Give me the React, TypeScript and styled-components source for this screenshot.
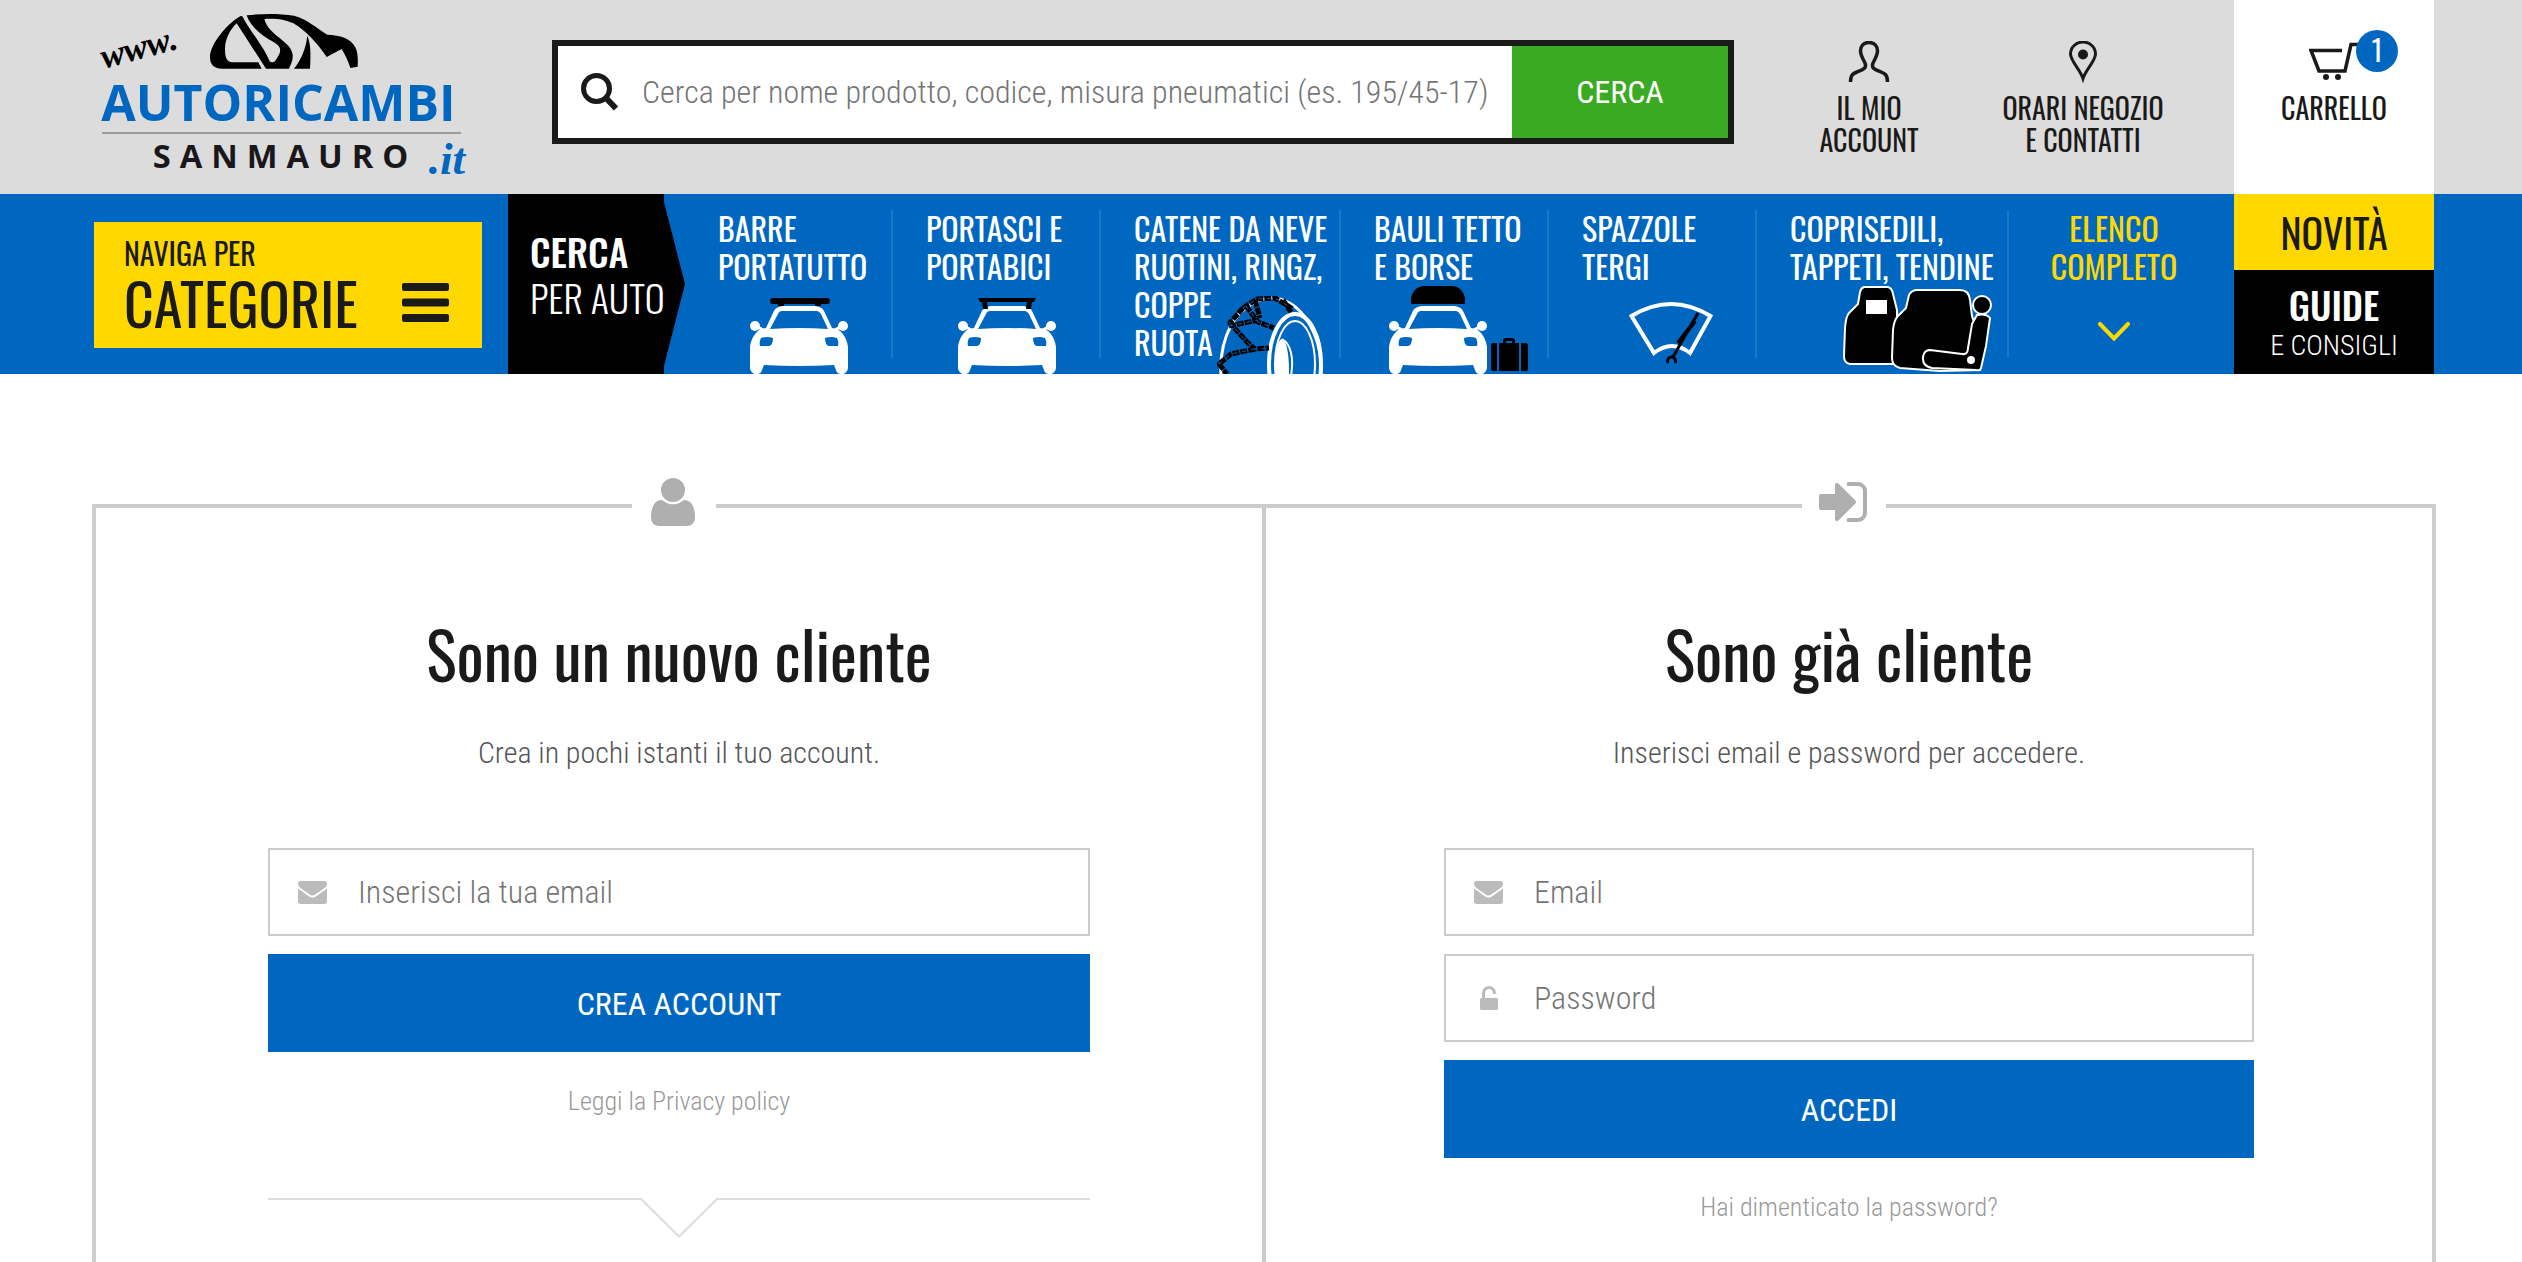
import React from "react";
import styled, { createGlobalStyle } from "styled-components";

const blue = "#0067c1";
const yellow = "#ffd800";
const ink = "#1a1a18";
const line = "#cccccc";
const oswald = `"Oswald", "Roboto Condensed", sans-serif`;
const roboto = `"Roboto Condensed", "Roboto", sans-serif`;

const GlobalStyle = createGlobalStyle`
  *, *::before, *::after { box-sizing: border-box; }
  body { margin: 0; background: #fff; color: ${ink}; font-family: ${roboto}; }
  a { color: inherit; text-decoration: none; }
  button { border: 0; padding: 0; cursor: pointer; }
  svg { display: block; flex: none; }
  h2, p, ul { margin: 0; padding: 0; }
  ul { list-style: none; }
`;

const Page = styled.div`
  min-height: 100vh;
  display: flex;
  flex-direction: column;
`;

/* ---------- header ---------- */

const Header = styled.header`
  display: flex;
  height: 194px;
  padding: 0 88px 0 94px;
  background: #dcdcdc;
`;

const SearchForm = styled.form`
  flex: 1;
  display: flex;
  align-items: stretch;
  height: 104px;
  margin: 40px 0 0 78px;
  border: 6px solid ${ink};
  background: #fff;
`;

const SearchLabel = styled.label`
  flex: 1;
  display: flex;
  align-items: center;
  gap: 23px;
  min-width: 0;
  padding-left: 23px;
`;

const TextInput = styled.input`
  flex: 1;
  min-width: 0;
  padding: 0;
  border: 0;
  outline: 0;
  background: transparent;
  color: ${ink};
  font: 300 32px/40px ${roboto};
  &::placeholder { color: #757575; opacity: 1; }
`;

const SearchButton = styled.button`
  width: 216px;
  background: #3aaa22;
  color: #fff;
  font: 400 32px/40px ${roboto};
`;

const Actions = styled.nav`
  display: flex;
  margin: 0 44px 0 28px;
`;

const Action = styled.a<{ $cart?: boolean }>`
  position: relative;
  display: flex;
  flex-direction: column;
  align-items: center;
  gap: 9px;
  width: ${(p) => (p.$cart ? 200 : 214)}px;
  padding-top: 41px;
  background: ${(p) => (p.$cart ? "#fff" : "transparent")};
  text-align: center;
  font: 400 28px/32px ${oswald};
`;

const Badge = styled.span`
  position: absolute;
  top: 30px;
  right: 36px;
  width: 42px;
  height: 42px;
  border-radius: 50%;
  background: ${blue};
  color: #fff;
  font: 400 28px/40px ${oswald};
`;

/* ---------- navigation bar ---------- */

const NavBar = styled.nav`
  display: flex;
  height: 180px;
  padding: 0 88px 0 94px;
  background: ${blue};
`;

const CategoriesButton = styled.button`
  display: flex;
  flex-direction: column;
  flex: none;
  width: 388px;
  height: 126px;
  margin: 28px 26px 0 0;
  padding: 13px 33px 0 30px;
  background: ${yellow};
  color: ${ink};
  text-align: left;
`;

const CategoriesSmall = styled.span`
  font: 400 30px/36px ${oswald};
`;

const CategoriesBig = styled.span`
  display: flex;
  align-items: center;
  justify-content: space-between;
  font: 400 58px/62px ${oswald};
`;

const CarSearch = styled.a`
  flex: none;
  width: 177px;
  padding: 34px 0 0 22px;
  background: #000;
  color: #fff;
  clip-path: polygon(0 0, 156px 0, 156px 8px, 100% 50%, 156px calc(100% - 8px), 156px 100%, 0 100%);
  font: 300 38px/46px ${oswald};
`;

const Strong = styled.strong`
  display: block;
  font-weight: 500;
`;

const MenuList = styled.ul`
  flex: 1;
  display: flex;
`;

const MenuItem = styled.li<{ $grow: number; $last?: boolean }>`
  flex: ${(p) => p.$grow} 1 0;
  min-width: 0;
  background: ${(p) =>
    p.$last ? "none" : "linear-gradient(#1c77c7, #1c77c7) no-repeat right 16px / 2px 148px"};
`;

const MenuLink = styled.a`
  display: grid;
  height: 100%;
  padding: 15px 0 0 33px;
  color: #fff;
  font: 400 32px/38px ${oswald};
  white-space: nowrap;
`;

const MenuText = styled.span`
  grid-area: 1 / 1;
`;

const MenuArt = styled.span<{ $right: number; $bottom: number }>`
  grid-area: 1 / 1;
  align-self: end;
  justify-self: end;
  margin: 0 ${(p) => p.$right}px ${(p) => p.$bottom}px 0;
`;

const AllLink = styled.a`
  display: flex;
  flex-direction: column;
  align-items: center;
  gap: 37px;
  padding: 15px 15px 0 0;
  color: ${yellow};
  font: 400 32px/38px ${oswald};
  text-align: center;
`;

const SideLinks = styled.div`
  flex: none;
  display: flex;
  flex-direction: column;
  width: 200px;
  text-align: center;
`;

const NewsLink = styled.a`
  background: ${yellow};
  color: ${ink};
  font: 400 40px/76px ${oswald};
`;

const GuideLink = styled.a`
  flex: 1;
  padding-top: 12px;
  background: #000;
  color: #fff;
  font: 300 28px/40px ${roboto};
  & > ${Strong} { font: 500 38px/44px ${oswald}; }
`;

/* ---------- login panels ---------- */

const Main = styled.main`
  flex: 1;
  display: flex;
  padding: 130px 86px 0 92px;
`;

const Frame = styled.div`
  flex: 1;
  display: grid;
  grid-template-columns: 1fr 1fr;
  border: solid ${line};
  border-width: 4px 0 0 4px;
`;

const Panel = styled.section<{ $inset: number }>`
  position: relative;
  padding: 105px ${(p) => p.$inset}px 20px;
  border-right: 4px solid ${line};
  text-align: center;
`;

const PanelIcon = styled.span`
  position: absolute;
  top: -30px;
  left: calc(50% - 47px);
  display: flex;
  align-items: center;
  justify-content: center;
  width: 84px;
  height: 48px;
  padding-right: 2px;
  background: #fff;
  color: #afafaf;
`;

const Title = styled.h2`
  font: 400 64px/80px ${oswald};
`;

const Lead = styled.p`
  margin-top: 40px;
  color: #555;
  font: 300 30px/40px ${roboto};
`;

const Form = styled.form`
  display: flex;
  flex-direction: column;
  gap: 18px;
  margin-top: 75px;
`;

const Field = styled.label`
  display: flex;
  align-items: center;
  gap: 31px;
  height: 88px;
  padding: 0 28px;
  border: 2px solid ${line};
  background: #fff;
  color: #bbb;
`;

const FieldIcon = styled.span`
  display: flex;
  justify-content: center;
  width: 29px;
`;

const Submit = styled.button`
  height: 98px;
  padding-top: 2px;
  background: ${blue};
  color: #fff;
  font: 400 32px/40px ${roboto};
`;

const SmallLink = styled.a`
  display: inline-block;
  margin-top: 29px;
  color: #999;
  font: 300 26px/40px ${roboto};
`;

const Divider = styled.div`
  display: flex;
  margin-top: 77px;
`;

const Rule = styled.span`
  flex: 1;
  height: 2px;
  background: #ddd;
`;

/* ---------- drawings ---------- */

const Logo = () => (
  <svg width="380" height="194" viewBox="42 0 1140 582" role="img" aria-label="Autoricambi Sanmauro">
    <g fill="#000">
      <path d="M482 48C450 64 390 128 390 172C390 196 404 206 426 206H545L535 187H455C439 185 435 170 435 148C435 118 450 88 470 70L558 206H627C636 186 639 178 638 164C636 138 606 122 580 98C564 84 556 70 553 57C590 55 612 58 640 70C676 90 712 130 740 171L785 147C796 166 806 186 811 204L833 200C834 178 834 158 826 142C812 114 780 106 742 104C710 84 682 58 642 47C596 40 540 41 500 46C512 82 548 108 582 127C606 142 606 154 586 182C580 188 574 188 569 184C558 158 546 140 530 116C514 94 500 74 487 49Z" />
      <path d="M682 107C692 130 693 164 690 206H642C664 178 678 144 682 107Z" />
    </g>
    <text x="72" y="206" transform="rotate(-15 72 206)" fill="#000" fontFamily="'Liberation Serif', serif" fontStyle="italic" fontWeight="700" fontSize="106">www.</text>
    <text x="64" y="364" fill={blue} fontFamily="'Open Sans', sans-serif" fontWeight="700" fontSize="150">AUTORICAMBI</text>
    <rect x="66" y="396" width="1077" height="6" fill="#9c9c9a" />
    <text x="218" y="504" fill="#1a171b" fontFamily="'Open Sans', sans-serif" fontWeight="700" fontSize="98" letterSpacing="27">SANMAURO</text>
    <text x="1046" y="522" fill={blue} fontFamily="'Liberation Serif', serif" fontStyle="italic" fontWeight="700" fontSize="136">.it</text>
  </svg>
);

const SearchIcon = () => (
  <svg width="38" height="38" viewBox="0 0 38 38" fill="none" stroke={ink}>
    <circle cx="15.5" cy="15.5" r="13" strokeWidth="5" />
    <path d="M25 25L35 35.5" strokeWidth="6" />
  </svg>
);

const PersonIcon = () => (
  <svg width="42" height="42" viewBox="-1 0 42 42" fill="none" stroke={ink} strokeWidth="3.5">
    <path d="M1.5 41C1.5 34 4 32.500 8 31C13 29 19 27.500 15.500 21C12.500 15.500 11.500 12 11.500 10C11.500 5 14.500 1.500 20 1.500S28.500 5 28.500 10C28.500 12 27.500 15.500 24.500 21C21 27.500 27 29 32 31C36 32.500 38.500 34 38.500 41" />
  </svg>
);

const PinIcon = () => (
  <svg width="28" height="42" viewBox="0 0 28 42">
    <path d="M14 37.500C11 28 1.500 20 1.500 13A12.500 12 0 0 1 26.500 13C26.500 20 17 28 14 37.500Z" fill="none" stroke={ink} strokeWidth="3" />
    <circle cx="14" cy="13.500" r="5" fill={ink} />
  </svg>
);

const CartIcon = () => (
  <svg width="50" height="42" viewBox="0 0 50 42" fill="none" stroke={ink} strokeWidth="3.5">
    <path d="M33 9.500H2L10 30H36L42 3.500H50" />
    <circle cx="17" cy="36" r="3" fill={ink} stroke="none" />
    <circle cx="29" cy="36" r="3" fill={ink} stroke="none" />
  </svg>
);

const BurgerIcon = () => (
  <svg width="47" height="39" viewBox="0 0 47 39" fill={ink}>
    <rect width="47" height="8" rx="2" />
    <rect y="15.500" width="47" height="8" rx="2" />
    <rect y="31" width="47" height="8" rx="2" />
  </svg>
);

const ChevronIcon = () => (
  <svg width="34" height="19" viewBox="0 0 34 19" fill="none" stroke={yellow} strokeWidth="4" strokeLinecap="round">
    <path d="M3 2L17 16.500L31 2" />
  </svg>
);

const CarBody = () => (
  <g>
    <path
      fill="#fff"
      fillRule="evenodd"
      d="M35 9H63C70 9 73 11 75 16L82 31L87 32C93 35 97 42 98 50V70C98 79 87 79 86 73L84 68Q49 70 14 68L12 73C11 79 0 79 0 70V50C1 42 5 35 11 32L16 31L23 16C25 11 28 9 35 9ZM32 14Q29 14 28 17L20 32Q49 30 78 32L71 17Q69 14 67 14ZM11 41Q9 45 10 49H19Q23 48 23 41Q17 39 11 41ZM87 41Q81 39 75 41Q75 48 79 49H88Q89 45 87 41Z"
    />
    <circle cx="5" cy="29" r="5" fill="#fff" />
    <circle cx="93" cy="29" r="5" fill="#fff" />
    <path d="M8 30L18 36M90 30L80 36" stroke="#fff" strokeWidth="3" />
  </g>
);

const CarBarsArt = () => (
  <svg width="98" height="77" viewBox="0 0 98 77">
    <CarBody />
    <rect x="20" y="1" width="60" height="6" rx="3" />
    <path d="M28 6H34V9H28ZM65 6H71V9H65Z" />
  </svg>
);

const CarRackArt = () => (
  <svg width="98" height="77" viewBox="0 0 98 77">
    <CarBody />
    <path d="M20 1H78L76 5H22ZM24 5H29L30 12H25ZM69 5H74L73 12H68Z" />
  </svg>
);

const CarBoxArt = () => (
  <svg width="140" height="88" viewBox="0 -11 140 88">
    <CarBody />
    <path d="M22 7V1Q25 -11 36 -11H63Q73 -11 76 1V7Z" />
    <path d="M102 48Q102 46 104 46H108V74H104Q102 74 102 72ZM110 46H114V44Q114 41 117 41H123Q126 41 126 44V46H130V74H110ZM117 46H123V44H117ZM132 46H136Q139 46 139 48V72Q139 74 136 74H132Z" fillRule="evenodd" />
  </svg>
);

const TyreArt = () => (
  <svg width="108" height="78" viewBox="0 0 108 78" fill="none">
    <path d="M4 80C2 45 16 8 52 2C84 0 106 40 104 80" stroke="#fff" strokeWidth="3" />
    <ellipse cx="78" cy="68" rx="26" ry="50" stroke="#fff" strokeWidth="4" />
    <ellipse cx="78" cy="68" rx="20" ry="43" stroke="#fff" strokeWidth="2" />
    <ellipse cx="65" cy="74" rx="7" ry="31" fill="#fff" />
    <path d="M65 43C74 48 77 62 74 80" stroke="#fff" strokeWidth="2" />
    <g stroke="#000" strokeWidth="5" strokeDasharray="7 1" strokeLinejoin="round">
      <path d="M26 12L40 3L58 2L76 13" />
      <path d="M29 10L41 26L57 32M12 30L41 24M66 4L74 16M38 4L43 22" />
      <path d="M12 26L31 47L38 53L52 52M38 53L14 58L2 68L10 78M26 12L12 28" />
    </g>
    <g stroke={blue} strokeWidth="1" strokeDasharray="4 5">
      <path d="M26 12L40 3L58 2L76 13M29 10L41 26L57 32M12 30L41 24" />
      <path d="M12 26L31 47L38 53L52 52M38 53L14 58L2 68" />
    </g>
  </svg>
);

const WiperArt = () => (
  <svg width="84" height="64" viewBox="0 0 84 64" fill="none">
    <path d="M2.500 15Q42 -9 81.500 15L61 52Q43 38 25 52Z" stroke="#fff" strokeWidth="4" />
    <path d="M69 12L44 56" stroke="#000" strokeWidth="3" />
    <path d="M66 20L49 42" stroke="#000" strokeWidth="4" />
    <path d="M39 62A4 4 0 1 1 46 62" stroke="#000" strokeWidth="3" />
  </svg>
);

const SeatsArt = () => (
  <svg width="150" height="86" viewBox="0 0 150 86" fill="#000" stroke="#fff" strokeWidth="2">
    <path d="M22 1H46Q50 2 51 8L55 24V78H8Q2 77 2 70L3 42Q4 30 7 27L16 18L18 6Q19 2 22 1Z" />
    <path d="M74 4H118Q127 4 128 14L130 30L140 60L138 84L98 85L58 82Q50 80 50 72L51 44Q52 34 56 30L64 22L67 9Q69 5 74 4Z" />
    <circle cx="140" cy="19" r="9" />
    <path d="M135 29Q144 27 148 32L144 60L139 82Q138 85 134 84L90 82Q80 80 81 71Q82 64 88 64L120 68Q126 69 126 62L130 38Z" />
    <circle cx="129" cy="74" r="3" fill="#fff" />
    <path d="M24 14H45V28H24Z" fill="#fff" stroke="none" />
  </svg>
);

const UserIcon = () => (
  <svg width="44" height="48" viewBox="0 0 1408 1536" fill="currentColor">
    <path
      transform="translate(0 1408) scale(1 -1)"
      d="M1408 131q0 -120 -73 -189.500t-194 -69.500h-874q-121 0 -194 69.500t-73 189.500q0 53 3.500 103.500t14 109t26.500 108.500t43 97.500t62 81t85.500 53.500t111.500 20q9 0 42 -21.500t74.500 -48t108 -48t133.500 -21.500t133.500 21.500t108 48t74.500 48t42 21.500q61 0 111.500 -20t85.500 -53.500t62 -81t43 -97.500t26.500 -108.500t14 -109t3.500 -103.500zM1088 1024q0 -159 -112.500 -271.500t-271.500 -112.500t-271.500 112.500t-112.500 271.500t112.500 271.500t271.500 112.500t271.500 -112.500t112.500 -271.500z"
    />
  </svg>
);

const SignInIcon = () => (
  <svg width="48" height="40" viewBox="128 256 1536 1280" fill="currentColor">
    <path d="M1312 896q0 26-19 45l-544 544q-19 19-45 19t-45-19-19-45v-288h-448q-26 0-45-19t-19-45v-384q0-26 19-45t45-19h448v-288q0-26 19-45t45-19 45 19l544 544q19 19 19 45zm352-352v704q0 119-84.500 203.500t-203.500 84.500h-320q-13 0-22.500-9.500t-9.500-22.500q0-4-1-20t-.5-26.500 3-23.500 10-19.500 20.500-6.500h320q66 0 113-47t47-113v-704q0-66-47-113t-113-47h-312l-11.500-1-11.500-3-8-5.500-7-9-2-13.500q0-4-1-20t-.5-26.500 3-23.500 10-19.500 20.500-6.500h320q119 0 203.500 84.500t84.500 203.500z" />
  </svg>
);

const EnvelopeIcon = () => (
  <svg width="29" height="23" viewBox="0 256 1792 1408" fill="currentColor">
    <path d="M1792 710v794q0 66-47 113t-113 47h-1472q-66 0-113-47t-47-113v-794q44 49 101 87 362 246 497 345 57 42 92.500 65.500t94.500 48 110 24.500h2q51 0 110-24.500t94.500-48 92.500-65.500q170-123 498-345 57-39 100-87zm0-294q0 79-49 151t-122 123q-376 261-468 325-10 7-42.500 31t-54 38.500-52 32.500-57.500 27-50 9h-2q-23 0-50-9t-57.500-27-52-32.500-54-38.500-42.500-31q-91-64-262-182.500t-205-142.500q-62-42-117-115.500t-55-136.500q0-78 41.500-130t118.500-52h1472q65 0 112.500 47t47.500 113z" />
  </svg>
);

const UnlockIcon = () => (
  <svg width="18" height="24" viewBox="320 0 1152 1536" fill="currentColor">
    <path d="M1376 768q40 0 68 28t28 68v576q0 40-28 68t-68 28h-960q-40 0-68-28t-28-68v-576q0-40 28-68t68-28h32v-320q0-185 131.500-316.500t316.500-131.500 316.500 131.500 131.500 316.500q0 26-19 45t-45 19h-64q-26 0-45-19t-19-45q0-106-75-181t-181-75-181 75-75 181v320h736z" />
  </svg>
);

/* ---------- data ---------- */

type Entry = {
  lines: string[];
  grow: number;
  right: number;
  bottom: number;
  Art: () => React.ReactElement;
};

const entries: Entry[] = [
  { lines: ["BARRE", "PORTATUTTO"], grow: 208, right: 45, bottom: 0, Art: CarBarsArt },
  { lines: ["PORTASCI E", "PORTABICI"], grow: 208, right: 45, bottom: 0, Art: CarRackArt },
  { lines: ["CATENE DA NEVE", "RUOTINI, RINGZ,", "COPPE", "RUOTA"], grow: 240, right: 16, bottom: 0, Art: TyreArt },
  { lines: ["BAULI TETTO", "E BORSE"], grow: 208, right: 20, bottom: 0, Art: CarBoxArt },
  { lines: ["SPAZZOLE", "TERGI"], grow: 208, right: 44, bottom: 9, Art: WiperArt },
  { lines: ["COPRISEDILI,", "TAPPETI, TENDINE"], grow: 252, right: 17, bottom: 2, Art: SeatsArt },
];

const Lines = ({ of }: { of: string[] }) => (
  <>
    {of.map((text, i) => (
      <React.Fragment key={text}>
        {i > 0 && <br />}
        {text}
      </React.Fragment>
    ))}
  </>
);

const stop = (e: React.FormEvent) => e.preventDefault();

export default function App() {
  return (
    <Page>
      <GlobalStyle />
      <Header>
        <a href="#home"><Logo /></a>
        <SearchForm onSubmit={stop}>
          <SearchLabel>
            <SearchIcon />
            <TextInput
              type="search"
              aria-label="Cerca"
              placeholder="Cerca per nome prodotto, codice, misura pneumatici (es. 195/45-17)"
            />
          </SearchLabel>
          <SearchButton type="submit">CERCA</SearchButton>
        </SearchForm>
        <Actions>
          <Action href="#account">
            <PersonIcon />
            <span><Lines of={["IL MIO", "ACCOUNT"]} /></span>
          </Action>
          <Action href="#contatti">
            <PinIcon />
            <span><Lines of={["ORARI NEGOZIO", "E CONTATTI"]} /></span>
          </Action>
        </Actions>
        <Action href="#carrello" $cart>
          <CartIcon />
          <Badge>1</Badge>
          <span>CARRELLO</span>
        </Action>
      </Header>

      <NavBar>
        <CategoriesButton type="button">
          <CategoriesSmall>NAVIGA PER</CategoriesSmall>
          <CategoriesBig>CATEGORIE <BurgerIcon /></CategoriesBig>
        </CategoriesButton>
        <CarSearch href="#auto">
          <Strong>CERCA</Strong>
          PER AUTO
        </CarSearch>
        <MenuList>
          {entries.map(({ lines, grow, right, bottom, Art }) => (
            <MenuItem key={lines[0]} $grow={grow}>
              <MenuLink href="#categoria">
                <MenuArt $right={right} $bottom={bottom}><Art /></MenuArt>
                <MenuText><Lines of={lines} /></MenuText>
              </MenuLink>
            </MenuItem>
          ))}
          <MenuItem $grow={225} $last>
            <AllLink href="#elenco">
              <span><Lines of={["ELENCO", "COMPLETO"]} /></span>
              <ChevronIcon />
            </AllLink>
          </MenuItem>
        </MenuList>
        <SideLinks>
          <NewsLink href="#novita">NOVITÀ</NewsLink>
          <GuideLink href="#guide"><Strong>GUIDE</Strong>E CONSIGLI</GuideLink>
        </SideLinks>
      </NavBar>

      <Main>
        <Frame>
          <Panel $inset={172}>
            <PanelIcon><UserIcon /></PanelIcon>
            <Title>Sono un nuovo cliente</Title>
            <Lead>Crea in pochi istanti il tuo account.</Lead>
            <Form onSubmit={stop}>
              <Field>
                <FieldIcon><EnvelopeIcon /></FieldIcon>
                <TextInput type="email" aria-label="La tua email" placeholder="Inserisci la tua email" />
              </Field>
              <Submit type="submit">CREA ACCOUNT</Submit>
            </Form>
            <SmallLink href="#privacy">Leggi la Privacy policy</SmallLink>
            <Divider>
              <Rule />
              <svg width="78" height="40" viewBox="0 0 78 40" fill="none" stroke="#ddd" strokeWidth="2">
                <path d="M0 1H1L39 38.500L77 1H78" />
              </svg>
              <Rule />
            </Divider>
          </Panel>
          <Panel $inset={178}>
            <PanelIcon><SignInIcon /></PanelIcon>
            <Title>Sono già cliente</Title>
            <Lead>Inserisci email e password per accedere.</Lead>
            <Form onSubmit={stop}>
              <Field>
                <FieldIcon><EnvelopeIcon /></FieldIcon>
                <TextInput type="email" aria-label="Email" placeholder="Email" />
              </Field>
              <Field>
                <FieldIcon><UnlockIcon /></FieldIcon>
                <TextInput type="password" aria-label="Password" placeholder="Password" />
              </Field>
              <Submit type="submit">ACCEDI</Submit>
            </Form>
            <SmallLink href="#recupero">Hai dimenticato la password?</SmallLink>
          </Panel>
        </Frame>
      </Main>
    </Page>
  );
}
